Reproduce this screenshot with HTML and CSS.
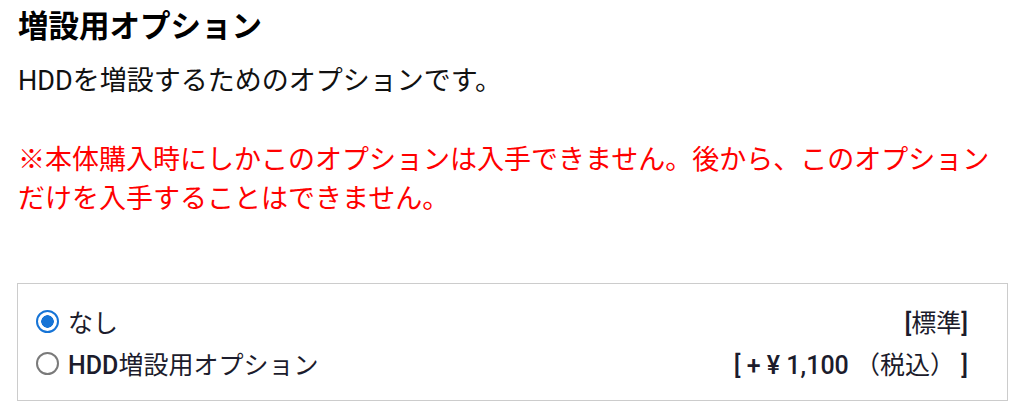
FILE: index.html
```html
<!DOCTYPE html>
<html lang="ja">
<head>
<meta charset="utf-8">
<title>増設用オプション</title>
<link rel="stylesheet" href="styles.css">
</head>
<body>
<div class="page">
  <h2 class="title">増設用オプション</h2>
  <p class="desc">HDDを増設するためのオプションです。</p>
  <p class="note">※本体購入時にしかこのオプションは入手できません。後から、このオプションだけを入手することはできません。</p>
  <div class="options">
    <label class="opt">
      <span class="left"><input type="radio" name="hdd" class="radio" checked><span class="name">なし</span></span>
      <span class="price"><span class="lat">[</span>標準<span class="lat">]</span></span>
    </label>
    <label class="opt">
      <span class="left"><input type="radio" name="hdd" class="radio"><span class="name"><span class="lat">HDD</span>増設用オプション</span></span>
      <span class="price"><span class="lat">[ + ¥ 1,100</span> （税込） <span class="lat">]</span></span>
    </label>
  </div>
</div>
</body>
</html>
```

FILE: styles.css
```css
html, body {
  margin: 0;
  padding: 0;
  background: #fff;
}
body {
  font-family: Roboto, "Noto Sans CJK JP", sans-serif;
  color: #111;
}
.page {
  padding: 7px 13px 0 18px;
}
.title {
  margin: 0;
  font-size: 30.5px;
  line-height: 40px;
  font-weight: 700;
  color: #000;
}
.desc {
  margin: 16px 0 0;
  font-size: 27px;
  line-height: 36px;
  color: #111;
}
.note {
  margin: 42px 0 0;
  font-size: 27px;
  line-height: 39px;
  color: #ff0000;
}
.options {
  margin: 64px 0 0 -1px;
  border: 1px solid #cccccc;
  padding: 16px 39px 16px 18px;
}
.opt {
  display: flex;
  justify-content: space-between;
  align-items: center;
  height: 42px;
  font-size: 25px;
  font-weight: 400;
  color: #1c1c2c;
  cursor: pointer;
}
.lat {
  font-weight: 500;
}
.left {
  display: flex;
  align-items: center;
  gap: 9px;
}
.radio {
  appearance: none;
  -webkit-appearance: none;
  flex: 0 0 auto;
  margin: 0;
  width: 23px;
  height: 23px;
  border-radius: 50%;
  border: 2px solid #7a7a7a;
  background: #fff;
  box-sizing: border-box;
}
.radio:checked {
  border: 2.5px solid #1674d6;
  background: radial-gradient(circle, #1674d6 0 6px, #fff 6.5px);
}
```
